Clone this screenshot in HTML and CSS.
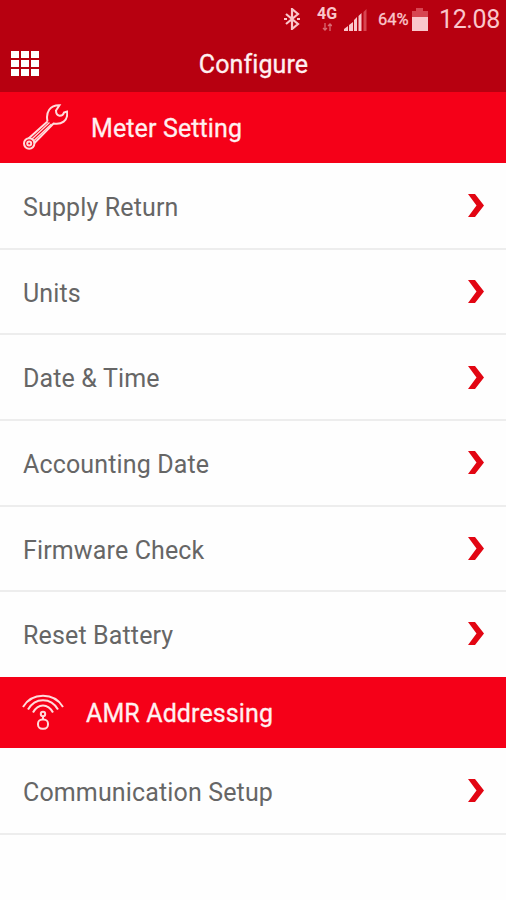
FILE: index.html
```html
<!DOCTYPE html>
<html lang="en">
<head>
<meta charset="utf-8">
<title>Configure</title>
<link rel="stylesheet" href="styles.css">
</head>
<body>
<header class="top">
  <div class="status">
    <svg class="bluetooth" viewBox="0 0 16 22"><path d="M2 6l12 10-6 5V1l6 5L2 16M0 11h3M13 11h3"/></svg>
    <div class="network"><span>4G</span>
      <svg class="updown" viewBox="0 0 10 8"><path d="M3 0v7M1 5l2 2 2-2M8 8V1M6 3l2-2 2 2"/></svg>
    </div>
    <svg class="signal" viewBox="0 0 23 23"><path d="M0 23v-2l4-3v5zM5 23v-6l4-3v9zM10 23V12l3-3v14zM14.500 23V8l3-3v18z"/><path class="weak" d="M19.500 23V4l3-3v22z"/></svg>
    <span class="percent">64%</span>
    <svg class="battery" viewBox="0 0 16 23"><path class="weak" d="M4 0h7v3h5v7H0V3h4z"/><path d="M0 9h16v14H0z"/></svg>
    <span class="clock">12.08</span>
  </div>
  <div class="bar">
    <div class="grid"><i></i><i></i><i></i><i></i><i></i><i></i><i></i><i></i><i></i></div>
    <h1 class="title">Configure</h1>
  </div>
</header>
<main>
  <h2 class="section">
    <svg class="wrench" viewBox="0 0 45 46"><path d="M24.500 17.500C22.500 8 27 1 36.500 1.200L33 6.500Q33 11 36.500 11.800Q40 12 41 8.500L44 7.500C45.500 17 38 21 30.500 19.500L11 39.500M24.500 17.500L5.500 34.500"/><circle cx="6.200" cy="39.500" r="5.200"/><circle cx="6.200" cy="39.500" r="2"/><path class="thin" d="M26.500 18.500L9 35M28.500 20L11 36.500"/></svg>
    <span class="meter">Meter Setting</span>
  </h2>
  <ul class="list">
    <li><span>Supply Return</span><svg class="arrow" viewBox="0 0 16 23"><path d="M0 0h7l9 11.500L7 23H0l8.500-11.500z"/></svg></li>
    <li><span>Units</span><svg class="arrow" viewBox="0 0 16 23"><path d="M0 0h7l9 11.500L7 23H0l8.500-11.500z"/></svg></li>
    <li><span>Date &amp; Time</span><svg class="arrow" viewBox="0 0 16 23"><path d="M0 0h7l9 11.500L7 23H0l8.500-11.500z"/></svg></li>
    <li><span>Accounting Date</span><svg class="arrow" viewBox="0 0 16 23"><path d="M0 0h7l9 11.500L7 23H0l8.500-11.500z"/></svg></li>
    <li><span>Firmware Check</span><svg class="arrow" viewBox="0 0 16 23"><path d="M0 0h7l9 11.500L7 23H0l8.500-11.500z"/></svg></li>
    <li><span>Reset Battery</span><svg class="arrow" viewBox="0 0 16 23"><path d="M0 0h7l9 11.500L7 23H0l8.500-11.500z"/></svg></li>
  </ul>
  <h2 class="section">
    <svg class="antenna" viewBox="0 0 42 36"><path d="M1 13C10-2 32-2 41 13M6 15.500C13 3 29 3 36 15.500M11 18.500C16 9 26 9 31 18.500M21 22v4"/><circle cx="21" cy="20" r="2.200"/><rect x="16" y="25.500" width="10" height="9.300" rx="4.200"/></svg>
    <span class="amr">AMR Addressing</span>
  </h2>
  <ul class="list">
    <li><span>Communication Setup</span><svg class="arrow" viewBox="0 0 16 23"><path d="M0 0h7l9 11.500L7 23H0l8.500-11.500z"/></svg></li>
  </ul>
</main>
</body>
</html>
```
FILE: styles.css
```css
* { box-sizing: border-box; }
body { margin: 0; min-height: 900px; background: #fefefe; font-family: Roboto, "Liberation Sans", sans-serif; }
.top { height: 92px; background: #b70010; color: #fff; }
.status { height: 38px; display: flex; align-items: center; justify-content: flex-end; padding-right: 6px; color: #fac6cb; fill: #fac6cb; }
.bluetooth { width: 16px; height: 22px; margin-right: 17px; fill: none; stroke: #fac6cb; stroke-width: 2.200; }
.network { width: 20px; height: 26px; margin-right: 7px; display: flex; flex-direction: column; align-items: center; font-size: 16px; line-height: 15px; font-weight: 700; }
.updown { width: 10px; height: 8px; margin-top: 2px; fill: none; stroke: #d96a73; stroke-width: 1.300; }
.signal { width: 23px; height: 23px; margin-right: 11px; }
.weak { fill: #d74551; }
.percent { width: 31px; font-size: 16.500px; margin-right: 3px; white-space: nowrap; -webkit-text-stroke: .3px #fac6cb; }
.battery { width: 16px; height: 23px; margin-right: 11px; }
.clock { font-size: 25px; letter-spacing: -.4px; width: 61px; line-height: 38px; padding-top: 2px; white-space: nowrap; }
.bar { height: 54px; display: grid; grid-template-columns: 88px 1fr 98px; align-items: center; padding-left: 11px; }
.grid { display: grid; grid-template-columns: repeat(3, 8px); grid-auto-rows: 7px; gap: 2px; margin-bottom: 3px; }
.grid i { background: #fff; }
.title { margin: 0; font-size: 25px; font-weight: 400; line-height: 54px; letter-spacing: .12px; text-align: center; color: #fff0f0; -webkit-text-stroke: .3px #fff0f0; }
.section { margin: 0; height: 71px; background: #f50018; color: #fff0f0; display: flex; align-items: center; padding-left: 23px; font-size: 25px; font-weight: 400; letter-spacing: .12px; -webkit-text-stroke: .3px #fff0f0; }
.meter, .amr { padding-top: 2px; }
.wrench, .antenna { fill: none; stroke: #ffdcdc; stroke-width: 2; flex: none; }
.thin { stroke-width: 1.200; }
.wrench { width: 45px; height: 46px; margin: 0 23px 2px 0; }
.antenna { width: 42px; height: 36px; margin: 0 21px 1px -1px; }
.amr { margin-left: 1px; }
.list { list-style: none; margin: 0; padding: 1px 0 0; color: #666; font-size: 25px; letter-spacing: .14px; }
.list li { height: 85.700px; border-bottom: 2px solid #ededed; display: flex; align-items: center; justify-content: space-between; padding: 3px 22px 0 23px; }
.list li:last-child:not(:only-child) { height: 84.700px; border-bottom-color: #fefefe; }
.arrow { width: 16px; height: 23px; fill: #e20613; margin-bottom: 3px; }
```
